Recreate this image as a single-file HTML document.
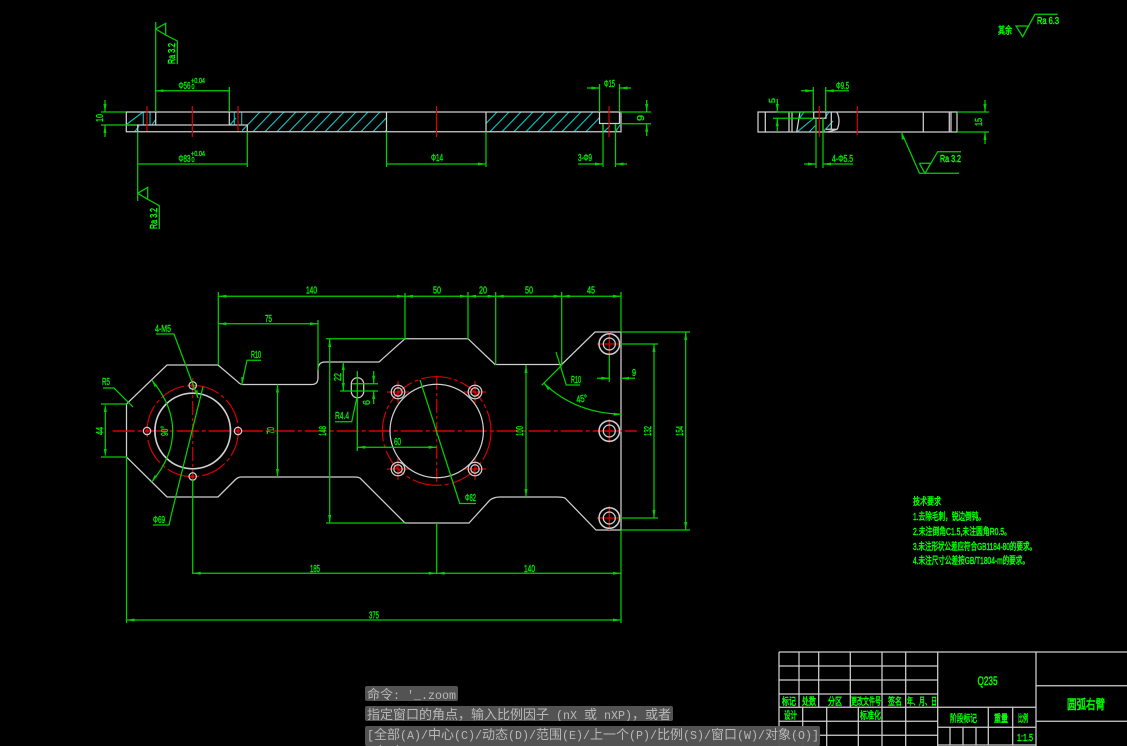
<!DOCTYPE html>
<html><head><meta charset="utf-8"><style>
html,body{margin:0;padding:0;background:#000;width:1127px;height:746px;overflow:hidden}
svg{position:absolute;left:0;top:0}
.w{stroke:#d0d0d0;stroke-width:1.25;fill:none}
.g{stroke:#00d000;stroke-width:1.25;fill:none}
.gd{stroke:#00d000;stroke-width:1.25;fill:none;marker-start:url(#a);marker-end:url(#a)}
.r{stroke:#d80000;stroke-width:1.2;fill:none}
.c{stroke:#00c8c8;stroke-width:1.1;fill:none}
text{font-family:"Liberation Sans","WenQuanYi Zen Hei","Noto Sans CJK SC",sans-serif;fill:#00e000;font-size:10px;stroke:#00e000;stroke-width:.45;}
.t{fill:#00ff00;stroke:#00ff00;stroke-width:.5}
.cmd{position:absolute;left:365px;background:rgba(86,86,86,.96);color:#b8b8b8;font:11.67px/16px "Liberation Mono","Noto Sans CJK SC",monospace;border-radius:2px;padding:0 1px 0 2px;white-space:pre;overflow:hidden}
.cmd b{font:13px/16px "Noto Sans CJK SC",sans-serif;font-weight:400}
</style></head><body>
<svg width="1127" height="746" viewBox="0 0 1127 746" xmlns="http://www.w3.org/2000/svg">
<defs>
<marker id="a" markerUnits="userSpaceOnUse" markerWidth="9" markerHeight="5" refX="8" refY="2.5" orient="auto-start-reverse"><path d="M8 2.5L0 1V4Z" fill="#00d000"/></marker>
<clipPath id="h1"><rect x="242" y="112" width="145" height="20"/></clipPath>
<clipPath id="h2"><rect x="486" y="112" width="114" height="20"/></clipPath>
</defs>

<!-- hatch -->
<g class="c">
<g clip-path="url(#h1)"><path d="M241 131.7l19-19.7M253 131.7l19-19.7M265 131.7l19-19.7M277 131.7l19-19.7M289 131.7l19-19.7M301 131.7l19-19.7M313 131.7l19-19.7M325 131.7l19-19.7M337 131.7l19-19.7M349 131.7l19-19.7M361 131.7l19-19.7M373 131.7l19-19.7M385 131.7l19-19.7"/></g>
<g clip-path="url(#h2)"><path d="M478 131.7l19-19.7M490 131.7l19-19.7M502 131.7l19-19.7M514 131.7l19-19.7M526 131.7l19-19.7M538 131.7l19-19.7M550 131.7l19-19.7M562 131.7l19-19.7M574 131.7l19-19.7M586 131.7l19-19.7"/></g>
<path d="M127 124L143 112M134.7 131.7L139 126M143.3 112V125M150 112V125M152 125L156 119M234.3 112V125M241.7 112V125M230 125L236 118"/>
<path d="M620 125L616 131M604 131.7L610 126"/>
<path d="M797 132L814 118M799 119L804 112M809 132L816 125M823 132L833 121M825 118L829 112"/>
</g>

<!-- view 1 outline -->
<g class="w">
<path d="M126.3 112H621V131.7H126.3ZM126.3 125H137.7M137.7 125H247.3V131.7M137.7 125V131.7M155.7 112V125M229.3 112V125M386.5 112V131.7M486 112V131.7M599.5 112V123.5H619.5V112M603 123.5V131.7M615.5 123.5V131.7"/>
</g>
<path class="r" d="M147 106V131M192.3 106V137M238 106V131M436.5 106V137M609 106V137"/>

<!-- view 2 outline -->
<g class="w">
<path d="M758 112H957V132H758ZM765.3 112V132M789 112V132M792 112V132M800 112L796.7 132M813.7 118.3H826V112M813.7 118.3V112M816 118.3V132M823 118.3V132M831.3 112V129.3M826 129.3H837.3L827.3 132M836.7 112Q841 120 837.3 129.3M923.3 112V132M949.3 112V132M951 112V132"/>
</g>
<path class="r" d="M819.3 106V137M857.3 106V135"/>

<!-- plan outline -->
<path class="w" d="M126.5 404L167 365H218L238 382Q240 384.5 243 384.5H311.7Q318 384.5 318 378V370Q318 362 325 362H379L405 338.7H468L495 364.5H561.7L595 332H621V530H596L565 498Q562 497 557 497H500Q494 497 490 500L469 523H405L360 478Q358 477 355 477H241Q238 477 235 480L218 497H167L126.5 457Z"/>

<!-- red lines -->
<path class="r" style="stroke-width:1.4" d="M112.7 431H637" stroke-dasharray="22 3 4 3"/>
<path class="r" d="M192.7 378V482M436.7 376V486" stroke-dasharray="14 3 3 3"/>
<circle class="r" cx="192.7" cy="431" r="45.6" stroke-dasharray="26 3 4 3"/>
<circle class="r" cx="436.7" cy="431" r="54.3" stroke-dasharray="30 3 4 3"/>
<path class="r" d="M387 392H409M398 381V403M464 392H486M475 381V403M387 469H409M398 458V480M464 469H486M475 458V480M597 344H622M609.3 332V356M597 431H622M609.3 419V443M597 518H622M609.3 506V530M357.5 374V402M352 383.7H363"/>
<circle cx="147" cy="431" r="1.8" fill="#d80000"/><circle cx="238" cy="431" r="1.8" fill="#d80000"/><circle cx="192.7" cy="385.5" r="1.8" fill="#d80000"/><circle cx="192.7" cy="476.5" r="1.8" fill="#d80000"/>

<!-- white circles -->
<g class="w">
<circle cx="192.7" cy="431" r="37.8" style="stroke-width:1.7"/>
<circle cx="147" cy="431" r="3.7"/><circle cx="238" cy="431" r="3.7"/><circle cx="192.7" cy="385.5" r="3.7"/><circle cx="192.7" cy="476.5" r="3.7"/>
<circle cx="436.7" cy="431" r="46.7"/>
<circle cx="398" cy="392" r="6.8"/><circle cx="398" cy="392" r="4.2"/>
<circle cx="475" cy="392" r="6.8"/><circle cx="475" cy="392" r="4.2"/>
<circle cx="398" cy="469" r="6.8"/><circle cx="398" cy="469" r="4.2"/>
<circle cx="475" cy="469" r="6.8"/><circle cx="475" cy="469" r="4.2"/>
<circle cx="609.3" cy="344" r="10.3" style="stroke-width:1.5"/><circle cx="609.3" cy="344" r="6"/>
<circle cx="609.3" cy="431" r="10.3" style="stroke-width:1.5"/><circle cx="609.3" cy="431" r="6"/>
<circle cx="609.3" cy="518" r="10.3" style="stroke-width:1.5"/><circle cx="609.3" cy="518" r="6"/>
<rect x="351.3" y="377.7" width="12.4" height="20" rx="6.2"/>
</g>

<!-- view 1 dims -->
<g class="g">
<path d="M155.7 22V112M155.7 29L165.7 23.3V35L177.3 41V64.3M155.7 29L165.7 35"/>
<path d="M137.7 131.7V201M137.7 193.3L147.7 187.3V199.3L159.3 205.7V229M137.7 193.3L147.7 199.3"/>
<path d="M229.3 87V112M247.3 131.7V167M101 112H126M101 125H137M386.5 131.7V167M486 131.7V167M603 124V167M615.5 124V167M599.5 84V112M619.5 84V112M620 112H651M620 123.7H651"/>
<path d="M587 88H599.5M619.5 88H631M578 164H603M615.5 164H627M105 100V112M105 125V137M646.7 100V112M646.7 123.7V136"/>
</g>
<path class="gd" d="M155.7 90.7H229.3M137.7 164H247.3M386.5 164H486"/>
<path d="M105 112l-1.5-8h3zM105 125l-1.5 8h3zM599.5 88l-8-1.5v3zM619.5 88l8-1.5v3zM603 164l-8-1.5v3zM615.5 164l8-1.5v3zM646.7 112l-1.5-8h3zM646.7 123.7l-1.5 8h3z" fill="#00d000"/>

<text x="178.5" y="89" textLength="12" lengthAdjust="spacingAndGlyphs">Φ56</text>
<text x="191" y="83" textLength="14" lengthAdjust="spacingAndGlyphs" style="font-size:7px">+0.04</text>
<text x="191.5" y="89" textLength="3" lengthAdjust="spacingAndGlyphs" style="font-size:7px">0</text>
<text x="178.5" y="162" textLength="12" lengthAdjust="spacingAndGlyphs">Φ83</text>
<text x="191" y="156" textLength="14" lengthAdjust="spacingAndGlyphs" style="font-size:7px">+0.04</text>
<text x="191.5" y="162" textLength="3" lengthAdjust="spacingAndGlyphs" style="font-size:7px">0</text>
<text transform="translate(175,64) rotate(-90)" textLength="21" lengthAdjust="spacingAndGlyphs" class="t">Ra 3.2</text>
<text transform="translate(157,229) rotate(-90)" textLength="21" lengthAdjust="spacingAndGlyphs" class="t">Ra 3.2</text>
<text transform="translate(103,122) rotate(-90)" textLength="8" lengthAdjust="spacingAndGlyphs">10</text>
<text x="431" y="161" textLength="12" lengthAdjust="spacingAndGlyphs">Φ14</text>
<text x="578" y="161" textLength="14" lengthAdjust="spacingAndGlyphs">3-Φ9</text>
<text x="604" y="87" textLength="11" lengthAdjust="spacingAndGlyphs">Φ15</text>
<text transform="translate(644,121) rotate(-90)" textLength="6" lengthAdjust="spacingAndGlyphs">9</text>

<!-- view 2 dims -->
<g class="g">
<path d="M813.3 87V112M825.7 87V112M801 90.7H813.3M825.7 90.7H849M777.3 99V112M777.3 118.3V131M777 112H813M773 118.3H813M816 118V168M823 118V168M804 164H816M823 164H853M985 100V112M985 132V144M957 112H989M957 132H989"/>
<path d="M901.3 132L919.5 173.3H959M919.3 163.3H930.7L925 173.3L919.3 163.3M925 173.3L937.7 151.7H961"/>
<path d="M1016 26H1028.3L1022.7 36.7ZM1022.7 36.7L1035 14.3H1057.7"/>
</g>
<path d="M813.3 90.7l-8-1.5v3zM825.7 90.7l8-1.5v3zM777.3 112l-1.5-8h3zM777.3 118.3l-1.5 8h3zM816 164l-8-1.5v3zM823 164l8-1.5v3zM985 112l-1.5-8h3zM985 132l-1.5 8h3zM901.3 132l.5 8 3-1.5z" fill="#00d000"/>
<text x="836" y="89" textLength="13" lengthAdjust="spacingAndGlyphs">Φ9.5</text>
<text x="832" y="162" textLength="21" lengthAdjust="spacingAndGlyphs">4-Φ5.5</text>
<text transform="translate(775,103) rotate(-90)" textLength="5" lengthAdjust="spacingAndGlyphs" style="font-size:8px">5</text>
<text transform="translate(982,126) rotate(-90)" textLength="8" lengthAdjust="spacingAndGlyphs">15</text>
<text x="940" y="162" textLength="21" lengthAdjust="spacingAndGlyphs" class="t">Ra 3.2</text>
<text x="1037" y="24" textLength="22" lengthAdjust="spacingAndGlyphs" class="t">Ra 6.3</text>
<text x="998" y="34" textLength="14" lengthAdjust="spacingAndGlyphs" class="t">其余</text>

<!-- plan dims -->
<g class="g">
<path d="M218.3 292V365M405 293V339M468 292V339M495.7 292V365M561.7 292V365M621 292V332M318 320V370M156 334H174L198 398M103 388H114L133 407M101 404H127M101 457H127M241.7 385L247 360.3H261M326 338.7H405M326 523H405M340 391H378M352 383.7H378M335 421.7H351.7L357 397M357.3 371V451M420 380L459.7 503.5H476M436.7 523V574M192.7 480V574M126.5 457V623M621 530V623M203 386.7L171.7 513L169 525H153M621 332H690M621 530H690M620 344H658M620 518H658M609.3 355V382M597 378.3H609.3M621 378.3H635M541.7 385.3L562 365M556 352L566.3 385H580"/>
<path d="M151.7 380Q172.7 405 172.7 431T151.7 482"/>
<path d="M544 383.3Q575 413 621.7 414.3"/>
<path d="M105.3 412V449"/>
<path d="M621 296.3H218M218 323.7H318M277.5 384.5V477M329.7 339V523M343.3 362V391M373.7 371V383.7M373.7 391V404M357.3 447.3H436.7M526 365V497M654 344V518M685.7 332V530M192.7 573.3H621M126.5 620H621"/>
</g>
<path fill="#00d000" d="M218.3 296.3l8-1.5v3zM405 296.3l-8-1.5v3zM405 296.3l8-1.5v3zM468 296.3l-8-1.5v3zM468 296.3l8-1.5v3zM495.7 296.3l-8-1.5v3zM495.7 296.3l8-1.5v3zM561.7 296.3l-8-1.5v3zM561.7 296.3l8-1.5v3zM621 296.3l-8-1.5v3zM218.3 323.7l8-1.5v3zM318 323.7l-8-1.5v3zM105.3 404l-1.5 8h3zM105.3 457l-1.5-8h3zM277.5 384.5l-1.5 8h3zM277.5 477l-1.5-8h3zM329.7 339l-1.5 8h3zM329.7 523l-1.5-8h3zM343.3 362l-1.5 8h3zM343.3 391l-1.5-8h3zM373.7 383.7l-1.5-8h3zM373.7 391l-1.5 8h3zM357.3 447.3l8-1.5v3zM436.7 447.3l-8-1.5v3zM526 365l-1.5 8h3zM526 497l-1.5-8h3zM654 344l-1.5 8h3zM654 518l-1.5-8h3zM685.7 332l-1.5 8h3zM685.7 530l-1.5-8h3zM609.3 378.3l-8-1.5v3zM621 378.3l8-1.5v3zM192.7 573.3l8-1.5v3zM436.7 573.3l-8-1.5v3zM436.7 573.3l8-1.5v3zM621 573.3l-8-1.5v3zM126.5 620l8-1.5v3zM621 620l-8-1.5v3zM621.7 414.3l-8-1.5v3zM544 383.3l4 7 2-2.5zM151.7 380l3 7 2.5-1.5zM151.7 482l3-7 2.5 1.5zM241.7 385l-.5-8 3 .8zM198 398l-3.5-7 3-1z"/>

<text x="306" y="293.5" textLength="11" lengthAdjust="spacingAndGlyphs">140</text>
<text x="433" y="293.5" textLength="8" lengthAdjust="spacingAndGlyphs">50</text>
<text x="479" y="293.5" textLength="8" lengthAdjust="spacingAndGlyphs">20</text>
<text x="525" y="293.5" textLength="8" lengthAdjust="spacingAndGlyphs">50</text>
<text x="587" y="293.5" textLength="8" lengthAdjust="spacingAndGlyphs">45</text>
<text x="265" y="322" textLength="7" lengthAdjust="spacingAndGlyphs">75</text>
<text x="251" y="358" textLength="10" lengthAdjust="spacingAndGlyphs">R10</text>
<text x="155" y="332" textLength="16" lengthAdjust="spacingAndGlyphs">4-M5</text>
<text x="102" y="385" textLength="8" lengthAdjust="spacingAndGlyphs">R5</text>
<text transform="translate(103,435) rotate(-90)" textLength="8" lengthAdjust="spacingAndGlyphs">44</text>
<text transform="translate(168,436) rotate(-90)" textLength="10" lengthAdjust="spacingAndGlyphs">90°</text>
<text x="153" y="523" textLength="12" lengthAdjust="spacingAndGlyphs">Φ69</text>
<text transform="translate(274,434) rotate(-90)" textLength="7" lengthAdjust="spacingAndGlyphs">70</text>
<text transform="translate(326,436) rotate(-90)" textLength="10" lengthAdjust="spacingAndGlyphs">148</text>
<text transform="translate(341,381) rotate(-90)" textLength="8" lengthAdjust="spacingAndGlyphs">22</text>
<text transform="translate(370,405) rotate(-90)" textLength="5" lengthAdjust="spacingAndGlyphs">6</text>
<text x="335" y="419" textLength="14" lengthAdjust="spacingAndGlyphs">R4.4</text>
<text x="394" y="445" textLength="7" lengthAdjust="spacingAndGlyphs">60</text>
<text x="465" y="501" textLength="11" lengthAdjust="spacingAndGlyphs">Φ82</text>
<text transform="translate(523,436) rotate(-90)" textLength="10" lengthAdjust="spacingAndGlyphs">100</text>
<text transform="translate(651,436) rotate(-90)" textLength="10" lengthAdjust="spacingAndGlyphs">132</text>
<text transform="translate(683,436) rotate(-90)" textLength="10" lengthAdjust="spacingAndGlyphs">154</text>
<text x="632" y="376" textLength="4" lengthAdjust="spacingAndGlyphs">9</text>
<text x="571" y="383" textLength="10" lengthAdjust="spacingAndGlyphs">R10</text>
<text transform="translate(577,403) rotate(-10)" textLength="11" lengthAdjust="spacingAndGlyphs">45°</text>
<text x="310" y="572" textLength="10" lengthAdjust="spacingAndGlyphs">185</text>
<text x="524" y="572" textLength="11" lengthAdjust="spacingAndGlyphs">140</text>
<text x="369" y="618.5" textLength="10" lengthAdjust="spacingAndGlyphs">375</text>

<!-- tech notes -->
<text class="t" x="913" y="505" textLength="28" lengthAdjust="spacingAndGlyphs">技术要求</text>
<text class="t" x="913" y="520" textLength="72" lengthAdjust="spacingAndGlyphs">1.去除毛刺，锐边倒钝。</text>
<text class="t" x="913" y="535" textLength="98" lengthAdjust="spacingAndGlyphs">2.未注倒角C1.5,未注圆角R0.5。</text>
<text class="t" x="913" y="550" textLength="123" lengthAdjust="spacingAndGlyphs">3.未注形状公差应符合GB1184-80的要求。</text>
<text class="t" x="913" y="564" textLength="116" lengthAdjust="spacingAndGlyphs">4.未注尺寸公差按GB/T1804-m的要求。</text>

<!-- title block -->
<path class="w" d="M779 652H1127M779 666H937.7M779 680H937.7M779 694H937.7M779 707.3H1036M779 721.3H937.7M779 735.3H937.7M938 727.3H1036M938 745H1036M1036 685.7H1127M1036 721.3H1127
M779 652V746M799 652V707M818.7 652V707M850.3 652V707M882 652V746M905.7 652V746M937.7 652V746M1036 652V746
M802.7 707V746M826.7 707V746M858.3 707V746
M988.3 707V745M1012.7 707V745M950 727V745M963 727V745M976 727V745"/>
<g>
<text class="t" x="782" y="705" textLength="14" lengthAdjust="spacingAndGlyphs">标记</text>
<text class="t" x="802" y="705" textLength="14" lengthAdjust="spacingAndGlyphs">处数</text>
<text class="t" x="828" y="705" textLength="14" lengthAdjust="spacingAndGlyphs">分区</text>
<text class="t" x="851" y="705" textLength="30" lengthAdjust="spacingAndGlyphs">更改文件号</text>
<text class="t" x="888" y="705" textLength="14" lengthAdjust="spacingAndGlyphs">签名</text>
<text class="t" x="907" y="705" textLength="30" lengthAdjust="spacingAndGlyphs">年、月、日</text>
<text class="t" x="784" y="719" textLength="13" lengthAdjust="spacingAndGlyphs">设计</text>
<text class="t" x="860" y="719" textLength="21" lengthAdjust="spacingAndGlyphs">标准化</text>
<text class="t" x="977.5" y="685" textLength="20" lengthAdjust="spacingAndGlyphs" style="font-size:12px">Q235</text>
<text class="t" x="950" y="722" textLength="27" lengthAdjust="spacingAndGlyphs">阶段标记</text>
<text class="t" x="994" y="722" textLength="14" lengthAdjust="spacingAndGlyphs">重量</text>
<text class="t" x="1018" y="722" textLength="10" lengthAdjust="spacingAndGlyphs">比例</text>
<text class="t" x="1017" y="741" textLength="16" lengthAdjust="spacingAndGlyphs">1:1.5</text>
<text class="t" x="1067" y="709" textLength="38" lengthAdjust="spacingAndGlyphs" style="font-size:13px">圆弧右臂</text>
</g>
</svg>
<div class="cmd" style="top:686px;height:15px;width:90px"><b>命令</b>: '_.zoom</div>
<div class="cmd" style="top:706px;height:15px;width:305px"><b>指定窗口的角点，输入比例因子</b> (nX <b>或</b> nXP)<b>，或者</b></div>
<div class="cmd" style="top:726px;height:20px;width:452px">[<b>全部</b>(A)/<b>中心</b>(C)/<b>动态</b>(D)/<b>范围</b>(E)/<b>上一个</b>(P)/<b>比例</b>(S)/<b>窗口</b>(W)/<b>对象</b>(O)]<span style="position:absolute;left:9px;top:17px"><b>实时</b></span></div>
</body></html>
